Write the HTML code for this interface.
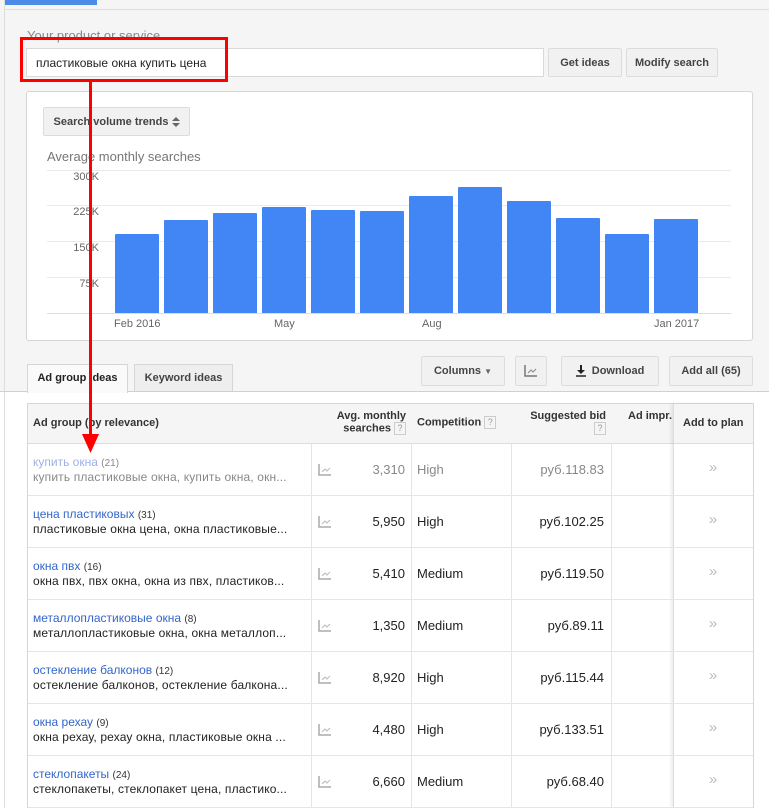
<!DOCTYPE html>
<html><head><meta charset="utf-8">
<style>
*{box-sizing:border-box;margin:0;padding:0}
body{width:769px;height:808px;overflow:hidden;background:#fff;font-family:"Liberation Sans",Arial,sans-serif;font-size:12px;color:#222;position:relative}
.a{position:absolute}
.btn{position:absolute;border:1px solid #dcdcdc;border-radius:2px;background:#f1f1f1;font-weight:bold;font-size:11px;color:#444;display:flex;align-items:center;justify-content:center}
.v{position:absolute;top:403px;bottom:0;width:1px;background:#e5e5e5}
.q{display:inline-block;width:12px;height:13px;border:1px solid #ccc;font-size:9px;color:#999;text-align:center;line-height:11px;font-weight:normal;vertical-align:middle}
.bar{position:absolute;background:#4285f4;width:44px;border-radius:1px 1px 0 0}
.gl{position:absolute;left:47px;width:684px;height:1px;background:#ebebeb}
.yl{position:absolute;width:55px;left:44px;text-align:right;font-size:11px;color:#666}
</style></head><body>
<div class="a" style="left:0;top:0;width:769px;height:392px;background:#f5f5f5"></div>
<div class="a" style="left:4px;top:0;width:1px;height:808px;background:#ddd"></div>
<div class="a" style="left:5px;top:0;width:92px;height:5px;background:#4a8be7"></div>
<div class="a" style="left:5px;top:9px;width:764px;height:1px;background:#ddd"></div>

<div class="a" style="left:27px;top:28px;font-size:13px;color:#888">Your product or service</div>
<div class="a" style="left:26px;top:48px;width:518px;height:29px;background:#fff;border:1px solid #d9d9d9"></div>
<div class="a" style="left:36px;top:56px;font-size:12px;color:#222">пластиковые окна купить цена</div>
<div class="btn" style="left:548px;top:48px;width:74px;height:29px">Get ideas</div>
<div class="btn" style="left:626px;top:48px;width:92px;height:29px">Modify search</div>

<div class="a" style="left:26px;top:91px;width:727px;height:250px;background:#fff;border:1px solid #d6d6d6;border-radius:3px"></div>
<div class="btn" style="left:43px;top:107px;width:147px;height:29px">Search volume trends&nbsp;<svg width="8" height="12" viewBox="0 0 8 12"><path d="M0 5L4 1L8 5Z M0 7L4 11L8 7Z" fill="#666"/></svg></div>
<div class="a" style="left:47px;top:149px;font-size:13px;color:#777">Average monthly searches</div>
<div class="gl" style="top:170px"></div><div class="gl" style="top:205px"></div><div class="gl" style="top:241px"></div><div class="gl" style="top:277px"></div><div class="gl" style="top:313px;background:#ddd"></div>
<div class="yl" style="top:171px">300K</div><div class="yl" style="top:206px">225K</div><div class="yl" style="top:242px">150K</div><div class="yl" style="top:278px">75K</div>
<div class="bar" style="left:115px;top:234px;height:79px"></div>
<div class="bar" style="left:164px;top:220px;height:93px"></div>
<div class="bar" style="left:213px;top:213px;height:100px"></div>
<div class="bar" style="left:262px;top:207px;height:106px"></div>
<div class="bar" style="left:311px;top:210px;height:103px"></div>
<div class="bar" style="left:360px;top:211px;height:102px"></div>
<div class="bar" style="left:409px;top:196px;height:117px"></div>
<div class="bar" style="left:458px;top:187px;height:126px"></div>
<div class="bar" style="left:507px;top:201px;height:112px"></div>
<div class="bar" style="left:556px;top:218px;height:95px"></div>
<div class="bar" style="left:605px;top:234px;height:79px"></div>
<div class="bar" style="left:654px;top:219px;height:94px"></div>
<div class="a" style="left:114px;top:318px;font-size:11px;color:#666">Feb 2016</div>
<div class="a" style="left:274px;top:318px;font-size:11px;color:#666">May</div>
<div class="a" style="left:422px;top:318px;font-size:11px;color:#666">Aug</div>
<div class="a" style="left:654px;top:318px;font-size:11px;color:#666">Jan 2017</div>

<div class="a" style="left:0;top:391px;width:769px;height:1px;background:#d0d0d0"></div>
<div class="a" style="left:27px;top:364px;width:101px;height:29px;background:#fafafa;border:1px solid #d6d6d6;border-bottom:none;font-weight:bold;font-size:11px;line-height:27px;text-align:center">Ad group ideas</div>
<div class="a" style="left:134px;top:364px;width:99px;height:27px;background:#eee;border:1px solid #d6d6d6;border-bottom:none;font-weight:bold;font-size:11px;color:#444;line-height:27px;text-align:center">Keyword ideas</div>
<div class="btn" style="left:421px;top:356px;width:84px;height:30px">Columns&nbsp;<span style="font-size:8px;color:#666">&#9660;</span></div>
<div class="btn" style="left:515px;top:356px;width:32px;height:30px"><svg width="14" height="12" viewBox="0 0 14 12"><path d="M1 0V11H13" stroke="#777" stroke-width="1.5" fill="none"/><path d="M4 8L7 5L9 7L12 4" stroke="#888" fill="none"/></svg></div>
<div class="btn" style="left:561px;top:356px;width:98px;height:30px"><svg width="10" height="12" viewBox="0 0 10 12"><path d="M5 0V7" stroke="#222" stroke-width="2"/><path d="M1 5L5 9L9 5Z" fill="#222"/><path d="M0 11H10" stroke="#222" stroke-width="1.5"/></svg>&nbsp;&nbsp;Download</div>
<div class="btn" style="left:669px;top:356px;width:84px;height:30px">Add all (65)</div>

<div class="a" style="left:27px;top:403px;width:727px;height:405px;border:1px solid #d6d6d6;border-bottom:none;background:#fff"></div>
<div class="a" style="left:28px;top:404px;width:725px;height:40px;background:#f5f5f5;border-bottom:1px solid #ddd"></div>
<div class="a" style="left:673px;top:404px;width:80px;height:404px;border-left:1px solid #ddd;box-shadow:-2px 0 3px rgba(0,0,0,.08)"></div>
<div class="v" style="left:311px;top:444px"></div><div class="v" style="left:411px;top:444px"></div><div class="v" style="left:511px;top:444px"></div><div class="v" style="left:611px;top:444px"></div>
<div class="a" style="left:33px;top:417px;font-weight:bold;font-size:11px;color:#333">Ad group (by relevance)</div>
<div class="a" style="left:320px;top:410px;width:86px;text-align:right;font-weight:bold;font-size:11px;color:#333;line-height:12px">Avg. monthly<br>searches <span class="q">?</span></div>
<div class="a" style="left:417px;top:416px;font-weight:bold;font-size:11px;color:#333">Competition <span class="q">?</span></div>
<div class="a" style="left:515px;top:410px;width:91px;text-align:right;font-weight:bold;font-size:11px;color:#333;line-height:12px">Suggested bid<br><span class="q">?</span></div>
<div class="a" style="left:628px;top:410px;font-weight:bold;font-size:11px;color:#333">Ad impr.</div>
<div class="a" style="left:683px;top:417px;font-weight:bold;font-size:11px;color:#333">Add to plan</div>

<div id="rows"></div>
<script>
var d=[["купить окна","21","купить пластиковые окна, купить окна, окн...","3,310","High","руб.118.83",1],
["цена пластиковых","31","пластиковые окна цена, окна пластиковые...","5,950","High","руб.102.25"],
["окна пвх","16","окна пвх, пвх окна, окна из пвх, пластиков...","5,410","Medium","руб.119.50"],
["металлопластиковые окна","8","металлопластиковые окна, окна металлоп...","1,350","Medium","руб.89.11"],
["остекление балконов","12","остекление балконов, остекление балкона...","8,920","High","руб.115.44"],
["окна рехау","9","окна рехау, рехау окна, пластиковые окна ...","4,480","High","руб.133.51"],
["стеклопакеты","24","стеклопакеты, стеклопакет цена, пластико...","6,660","Medium","руб.68.40"]];
var h="";d.forEach(function(r,i){var y=444+i*52,f=r[6];
h+='<div class="a" style="left:28px;top:'+(y+51)+'px;width:725px;height:1px;background:#e5e5e5"></div>';
h+='<div class="a" style="left:33px;top:'+(y+11)+'px;font-size:12px;color:'+(f?'#9fb0e8':'#3366cc')+'">'+r[0]+' <span style="font-size:10px;color:'+(f?'#888':'#333')+'">('+r[1]+')</span></div>';
h+='<div class="a" style="left:33px;top:'+(y+26)+'px;font-size:12px;color:'+(f?'#888':'#222')+';letter-spacing:.15px">'+r[2]+'</div>';
h+='<svg class="a" style="left:318px;top:'+(y+20)+'px" width="14" height="12" viewBox="0 0 14 12"><path d="M1 0V11H13" stroke="#aaa" stroke-width="1.5" fill="none"/><path d="M4 8L7 5L9 7L12 4" stroke="#bbb" fill="none"/></svg>';
h+='<div class="a" style="left:340px;width:65px;text-align:right;top:'+(y+18)+'px;font-size:13px;color:'+(f?'#888':'#222')+'">'+r[3]+'</div>';
h+='<div class="a" style="left:417px;top:'+(y+18)+'px;font-size:13px;color:'+(f?'#888':'#222')+'">'+r[4]+'</div>';
h+='<div class="a" style="left:515px;width:89px;text-align:right;top:'+(y+18)+'px;font-size:13px;color:'+(f?'#888':'#222')+'">'+r[5]+'</div>';
h+='<div class="a" style="left:673px;width:80px;text-align:center;top:'+(y+15)+'px;font-size:15px;color:#bbb">&raquo;</div>';});
document.getElementById("rows").innerHTML=h;
</script>

<div class="a" style="left:20px;top:37px;width:208px;height:45px;border:3px solid #f00"></div>
<div class="a" style="left:89px;top:82px;width:3px;height:355px;background:#f00"></div>
<svg class="a" style="left:82px;top:434px" width="17" height="19"><path d="M0 0H17L8.5 19Z" fill="#f00"/></svg>
</body></html>
